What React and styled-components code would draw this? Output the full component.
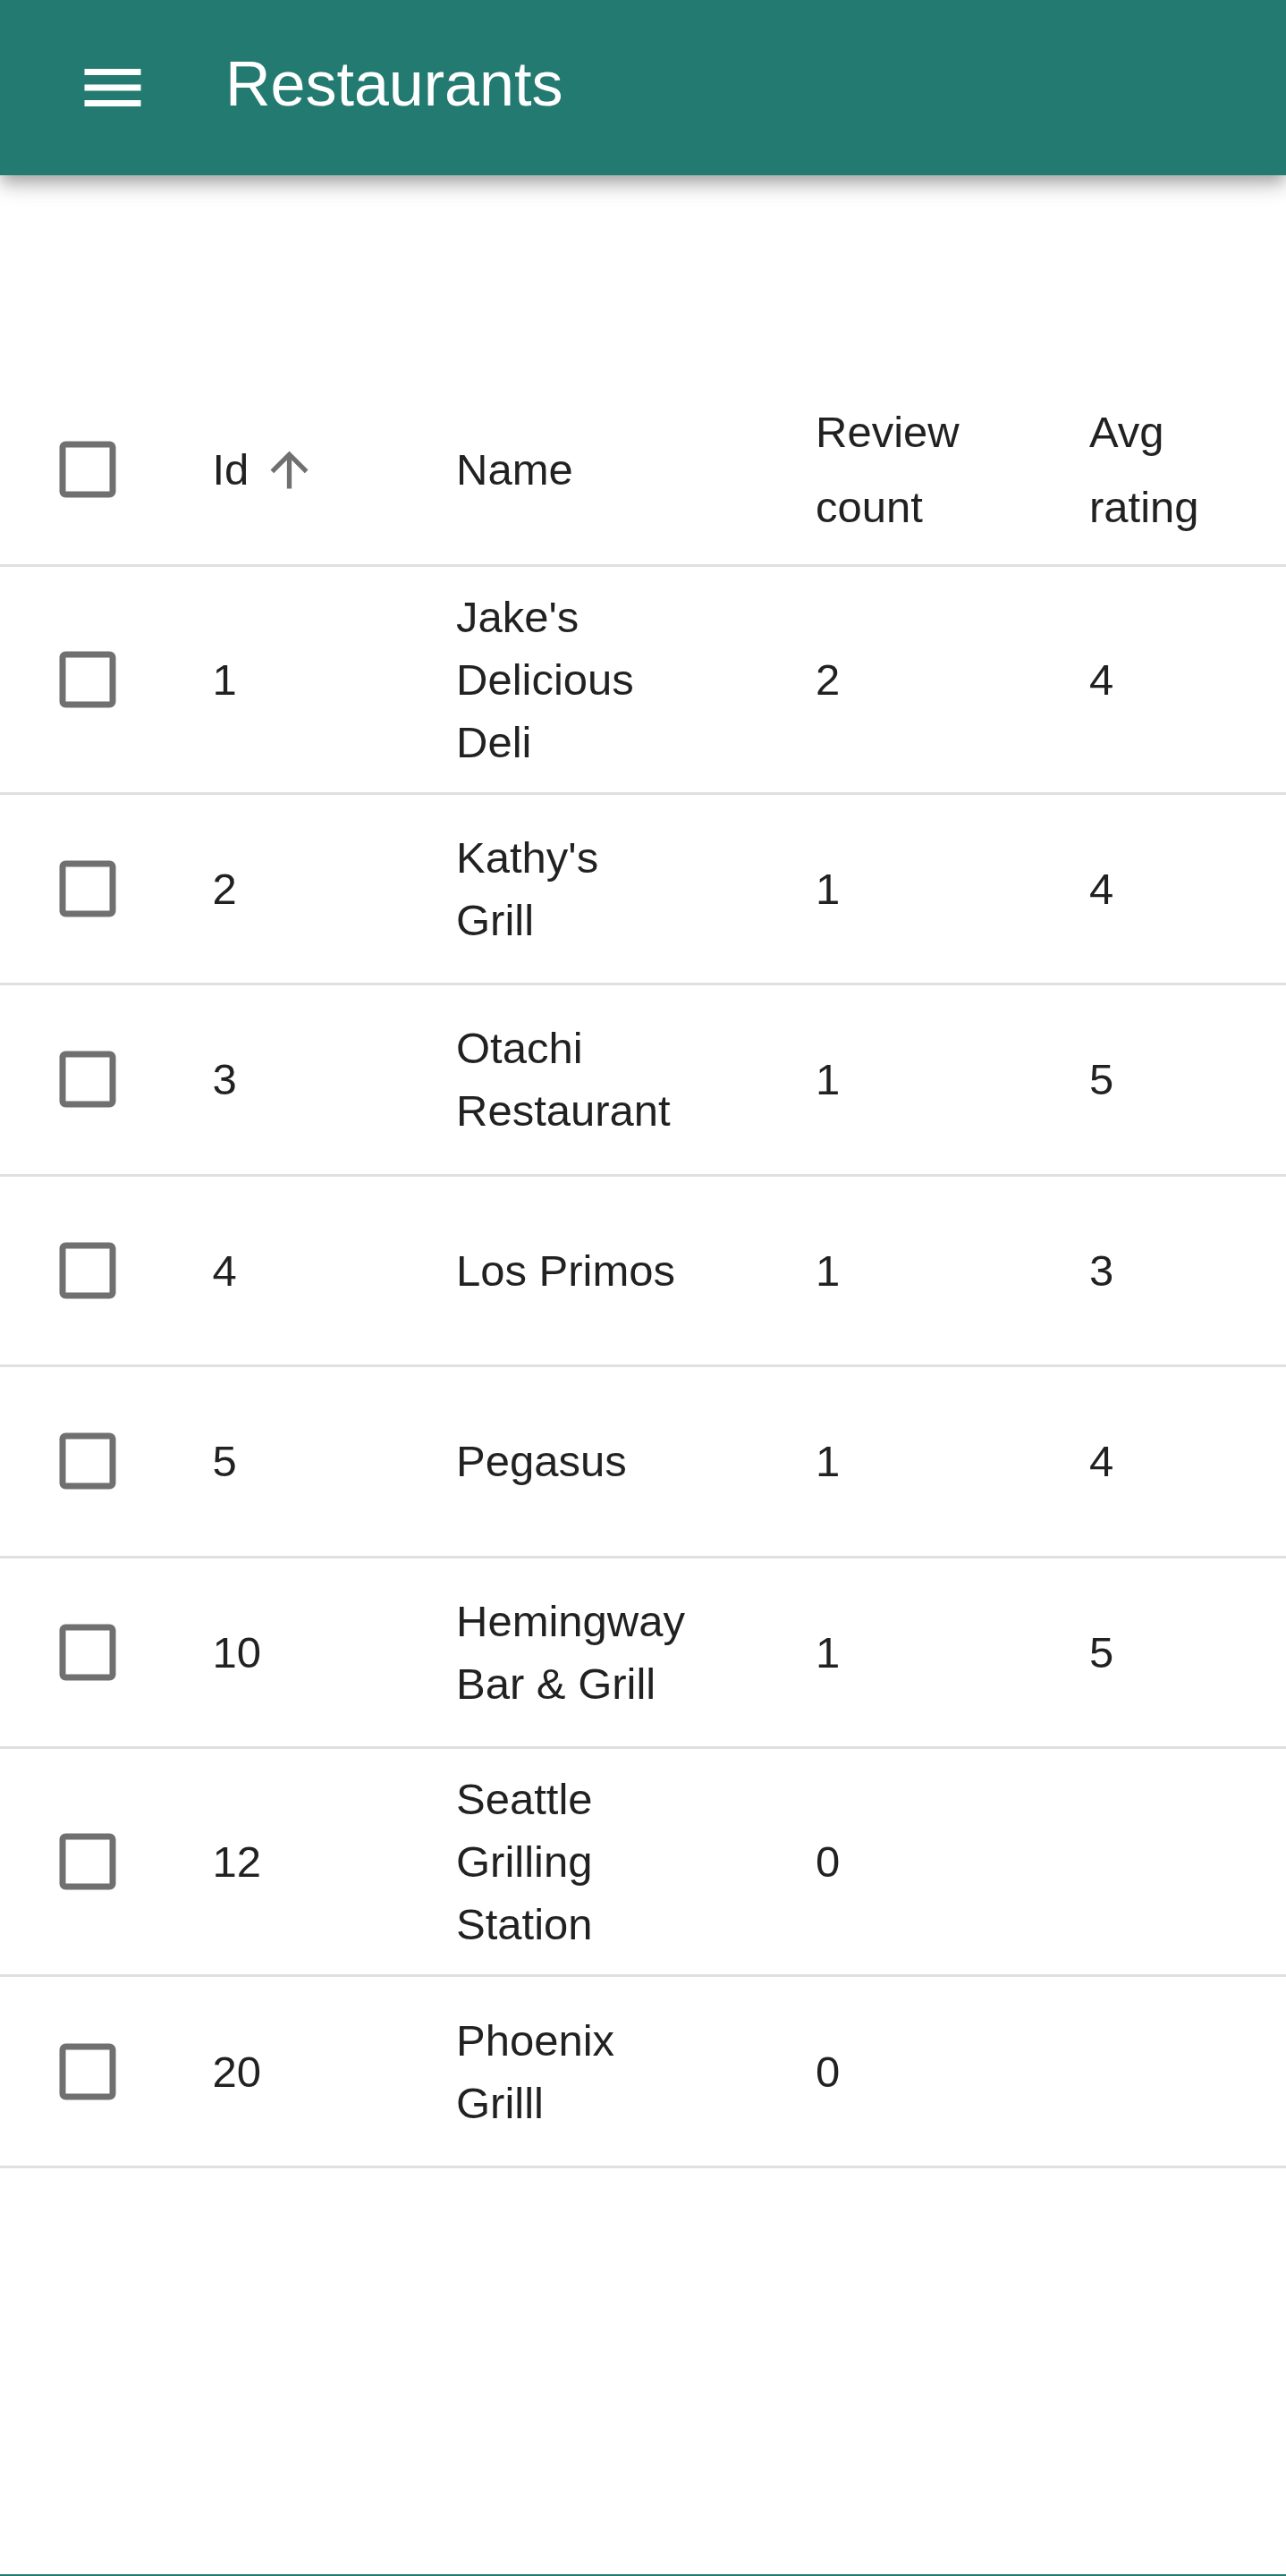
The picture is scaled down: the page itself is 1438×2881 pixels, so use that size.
import React from "react";
import styled, { createGlobalStyle } from "styled-components";

const GlobalStyle = createGlobalStyle`
  * { box-sizing: border-box; }
  html, body {
    margin: 0;
    padding: 0;
    background: #ffffff;
    font-family: "Liberation Sans", Arial, Helvetica, sans-serif;
    color: rgba(0, 0, 0, 0.87);
  }
`;

const TEAL = "#237a71";
const COLUMNS = "181.5px 272.5px 402px 306px 276px";

const Page = styled.div`
  min-height: 2881px;
  display: flex;
  flex-direction: column;
  background: #fff;
`;

const AppBar = styled.header`
  height: 196px;
  background: ${TEAL};
  display: flex;
  align-items: center;
  padding-left: 83.5px;
  gap: 84.5px;
  position: relative;
  z-index: 2;
  box-shadow: 0 7px 14px -3.5px rgba(0, 0, 0, 0.2),
    0 14px 17.5px 0 rgba(0, 0, 0, 0.14),
    0 3.5px 35px 0 rgba(0, 0, 0, 0.12);
`;

const MenuButton = styled.button`
  width: 84px;
  height: 84px;
  padding: 0;
  border: 0;
  background: transparent;
  color: #fff;
  display: flex;
  align-items: center;
  justify-content: center;
  svg {
    width: 84px;
    height: 84px;
    display: block;
  }
`;

const Title = styled.h1`
  margin: 0 0 8px 0;
  font-size: 70px;
  font-weight: 400;
  line-height: 1.6;
  color: #fff;
  letter-spacing: 0;
`;

const Main = styled.main`
  padding-top: 224px;
  flex: 1;
`;

const Table = styled.div`
  width: 1438px;
`;

const Row = styled.div`
  display: grid;
  grid-template-columns: ${COLUMNS};
  align-items: center;
  min-height: 213.5px;
  border-bottom: 3.5px solid #e0e0e0;
`;

const CheckboxCell = styled.div`
  padding-left: 24.5px;
  display: flex;
  align-items: center;
`;

const CheckboxButton = styled.span`
  width: 147px;
  height: 147px;
  display: flex;
  align-items: center;
  justify-content: center;
  color: rgba(0, 0, 0, 0.56);
  svg {
    width: 84px;
    height: 84px;
    display: block;
  }
`;

const Cell = styled.div`
  padding: 21px 88px 21px 56px;
  font-size: 49px;
  line-height: ${(p) => (p.$head ? "84px" : "1.43")};
  color: rgba(0, 0, 0, 0.87);
`;

const SortLabel = styled.span`
  display: inline-flex;
  align-items: center;
  svg {
    width: 63px;
    height: 63px;
    margin-left: 14px;
    color: rgba(0, 0, 0, 0.56);
    display: block;
  }
`;

const BottomEdge = styled.div`
  height: 2.5px;
  background: ${TEAL};
`;

const MenuIcon = () => (
  <svg viewBox="0 0 24 24" fill="currentColor" aria-hidden="true">
    <path d="M3 18h18v-2H3v2zm0-5h18v-2H3v2zm0-7v2h18V6H3z" />
  </svg>
);

const BlankBox = () => (
  <svg viewBox="0 0 24 24" fill="currentColor" aria-hidden="true">
    <path d="M19 5v14H5V5h14m0-2H5c-1.11 0-2 .9-2 2v14c0 1.1.89 2 2 2h14c1.1 0 2-.9 2-2V5c0-1.1-.9-2-2-2z" />
  </svg>
);

const ArrowUp = () => (
  <svg viewBox="0 0 24 24" fill="currentColor" aria-hidden="true">
    <path d="M4 12l1.41 1.41L11 7.83V20h2V7.83l5.58 5.59L20 12l-8-8-8 8z" />
  </svg>
);

const restaurants = [
  { id: 1, name: "Jake's Delicious Deli", reviews: 2, rating: 4 },
  { id: 2, name: "Kathy's Grill", reviews: 1, rating: 4 },
  { id: 3, name: "Otachi Restaurant", reviews: 1, rating: 5 },
  { id: 4, name: "Los Primos", reviews: 1, rating: 3 },
  { id: 5, name: "Pegasus", reviews: 1, rating: 4 },
  { id: 10, name: "Hemingway Bar & Grill", reviews: 1, rating: 5 },
  { id: 12, name: "Seattle Grilling Station", reviews: 0, rating: "" },
  { id: 20, name: "Phoenix Grilll", reviews: 0, rating: "" },
];

const Checkbox = () => (
  <CheckboxCell>
    <CheckboxButton>
      <BlankBox />
    </CheckboxButton>
  </CheckboxCell>
);

export default function App() {
  return (
    <Page>
      <GlobalStyle />
      <AppBar>
        <MenuButton aria-label="Open menu">
          <MenuIcon />
        </MenuButton>
        <Title>Restaurants</Title>
      </AppBar>
      <Main>
        <Table>
          <Row>
            <Checkbox />
            <Cell $head>
              <SortLabel>
                Id
                <ArrowUp />
              </SortLabel>
            </Cell>
            <Cell $head>Name</Cell>
            <Cell $head>Review count</Cell>
            <Cell $head>Avg rating</Cell>
          </Row>
          {restaurants.map((r) => (
            <Row key={r.id}>
              <Checkbox />
              <Cell>{r.id}</Cell>
              <Cell>{r.name}</Cell>
              <Cell>{r.reviews}</Cell>
              <Cell>{r.rating}</Cell>
            </Row>
          ))}
        </Table>
      </Main>
      <BottomEdge />
    </Page>
  );
}
